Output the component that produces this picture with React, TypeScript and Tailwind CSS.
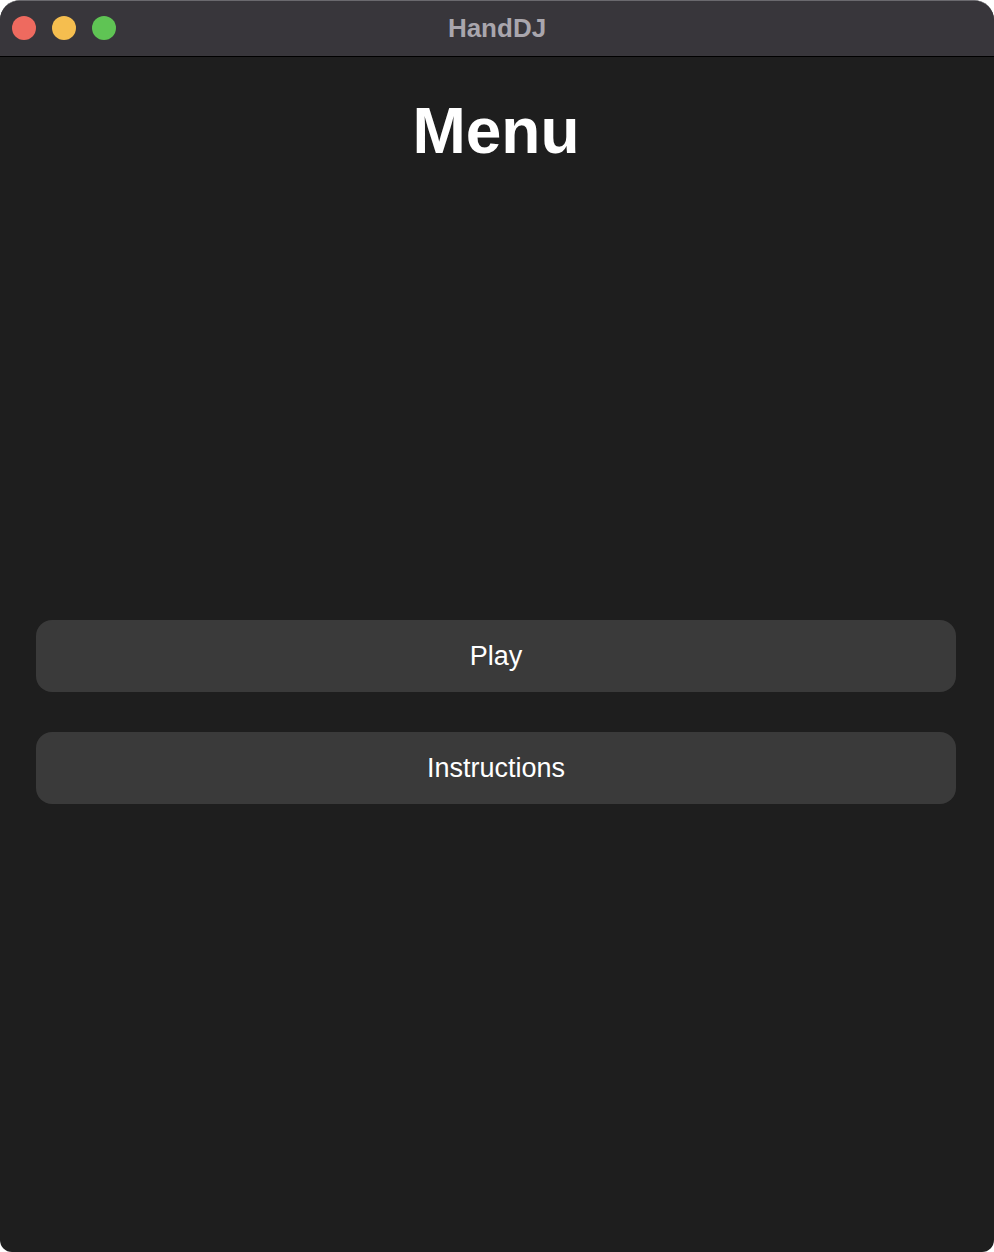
import React from "react";

const buttons = ["Play", "Instructions"];

export default function App() {
  return (
    <div className="w-[994px] h-[1252px] bg-white">
      <div className="flex h-full w-full flex-col overflow-hidden rounded-t-[20px] rounded-b-[12px] border-t border-[#6a696e] bg-[#1e1e1e] font-['Liberation_Sans',Arial,sans-serif]">
        {/* title bar */}
        <div className="relative flex h-[56px] shrink-0 items-center justify-center border-b border-black bg-[#38363b]">
          <div className="absolute left-[12px] top-[15px] flex gap-4">
            <span className="h-6 w-6 rounded-full bg-[#ee6a5f]" />
            <span className="h-6 w-6 rounded-full bg-[#f5be4f]" />
            <span className="h-6 w-6 rounded-full bg-[#5fc454]" />
          </div>
          <span className="text-[26px] font-bold text-[#a9a6ad]">HandDJ</span>
        </div>

        <div className="flex flex-col items-center pl-[36px] pr-[38px]">
          <h1 className="mt-[34px] text-[64px] leading-[80px] font-bold text-white">Menu</h1>

          <div className="mt-[449px] flex w-full flex-col gap-[40px]">
            {buttons.map((label) => (
              <button
                key={label}
                className="flex h-[72px] w-full items-center justify-center rounded-[16px] bg-[#3a3a3a] text-[27px] text-white"
              >
                {label}
              </button>
            ))}
          </div>
        </div>
      </div>
    </div>
  );
}
